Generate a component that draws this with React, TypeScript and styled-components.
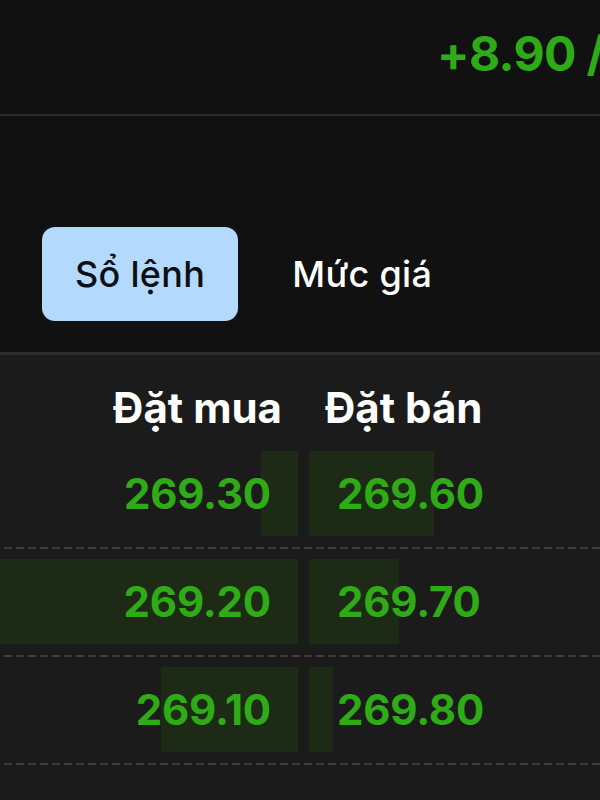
import React from "react";
import styled, { createGlobalStyle } from "styled-components";

const GlobalStyle = createGlobalStyle`
  html, body { margin: 0; padding: 0; background: #111111; }
  body { font-family: Inter, "Noto Sans", "Liberation Sans", sans-serif; }
  * { box-sizing: border-box; }
`;

const Screen = styled.div`
  width: 600px;
  height: 800px;
  overflow: hidden;
  background: #111111;
  display: flex;
  flex-direction: column;
`;

const PriceBar = styled.header`
  height: 116px;
  flex: none;
  border-bottom: 2px solid #2a2a2a;
  display: flex;
  align-items: flex-start;
  padding: 24px 0 0 437px;
  overflow: hidden;
  white-space: nowrap;
`;

const Change = styled.span`
  color: #2eab17;
  font-size: 48px;
  font-weight: 700;
  line-height: 60px;
  letter-spacing: -0.6px;
`;

const TabStrip = styled.nav`
  height: 239px;
  flex: none;
  display: flex;
  align-items: flex-start;
  gap: 21px;
  padding: 111px 0 0 42px;
  border-bottom: 3px solid #2c2c2c;
`;

const Tab = styled.button<{ $active?: boolean }>`
  height: 94px;
  padding: 0 33px;
  border: none;
  border-radius: 13px;
  background: ${(p) => (p.$active ? "#b3dafd" : "transparent")};
  color: ${(p) => (p.$active ? "#0b0f14" : "#ffffff")};
  font-family: inherit;
  font-size: 36px;
  font-weight: 500;
  letter-spacing: 0.3px;
  cursor: pointer;
`;

const Book = styled.section`
  flex: 1;
  background: #1b1b1b;
`;

const Grid = styled.div`
  display: grid;
  grid-template-columns: 298px 1fr;
  column-gap: 11px;
`;

const HeaderRow = styled(Grid)`
  padding: 29px 0 9px;
`;

const HeadCell = styled.div<{ $side: "buy" | "sell" }>`
  color: #ffffff;
  font-size: 42px;
  font-weight: 700;
  line-height: 48px;
  text-align: ${(p) => (p.$side === "buy" ? "right" : "left")};
  padding: ${(p) => (p.$side === "buy" ? "0 16px 0 0" : "0 0 0 16px")};
`;

const Row = styled(Grid)`
  padding: 10px 0 13px;
  position: relative;
  &::after {
    content: "";
    position: absolute;
    left: 4px;
    right: 0;
    bottom: 0;
    height: 2px;
    background: repeating-linear-gradient(
      to right,
      #3d3d3d 0 8px,
      transparent 8px 12px
    );
  }
`;

const Cell = styled.div<{ $side: "buy" | "sell" }>`
  position: relative;
  height: 85px;
  display: flex;
  align-items: center;
  justify-content: ${(p) => (p.$side === "buy" ? "flex-end" : "flex-start")};
  padding: ${(p) => (p.$side === "buy" ? "0 27px 0 0" : "0 0 0 28px")};
`;

const DepthBar = styled.div<{ $side: "buy" | "sell" }>`
  position: absolute;
  top: 0;
  bottom: 0;
  ${(p) => (p.$side === "buy" ? "right: 0;" : "left: 0;")}
  background: #1c2a16;
`;

const Price = styled.span`
  position: relative;
  color: #2eab17;
  font-size: 42px;
  font-weight: 700;
  line-height: 1;
  letter-spacing: -0.2px;
`;

const rows = [
  { bid: "269.30", bidDepth: 37, ask: "269.60", askDepth: 125 },
  { bid: "269.20", bidDepth: 298, ask: "269.70", askDepth: 90 },
  { bid: "269.10", bidDepth: 137, ask: "269.80", askDepth: 24 },
];

export default function App() {
  return (
    <Screen>
      <GlobalStyle />
      <PriceBar>
        <Change>+8.90 / +3.42%</Change>
      </PriceBar>
      <TabStrip>
        <Tab $active>Sổ lệnh</Tab>
        <Tab>Mức giá</Tab>
      </TabStrip>
      <Book>
        <HeaderRow>
          <HeadCell $side="buy">Đặt mua</HeadCell>
          <HeadCell $side="sell">Đặt bán</HeadCell>
        </HeaderRow>
        {rows.map((r) => (
          <Row key={r.bid}>
            <Cell $side="buy">
              <DepthBar $side="buy" style={{ width: r.bidDepth }} />
              <Price>{r.bid}</Price>
            </Cell>
            <Cell $side="sell">
              <DepthBar $side="sell" style={{ width: r.askDepth }} />
              <Price>{r.ask}</Price>
            </Cell>
          </Row>
        ))}
      </Book>
    </Screen>
  );
}
